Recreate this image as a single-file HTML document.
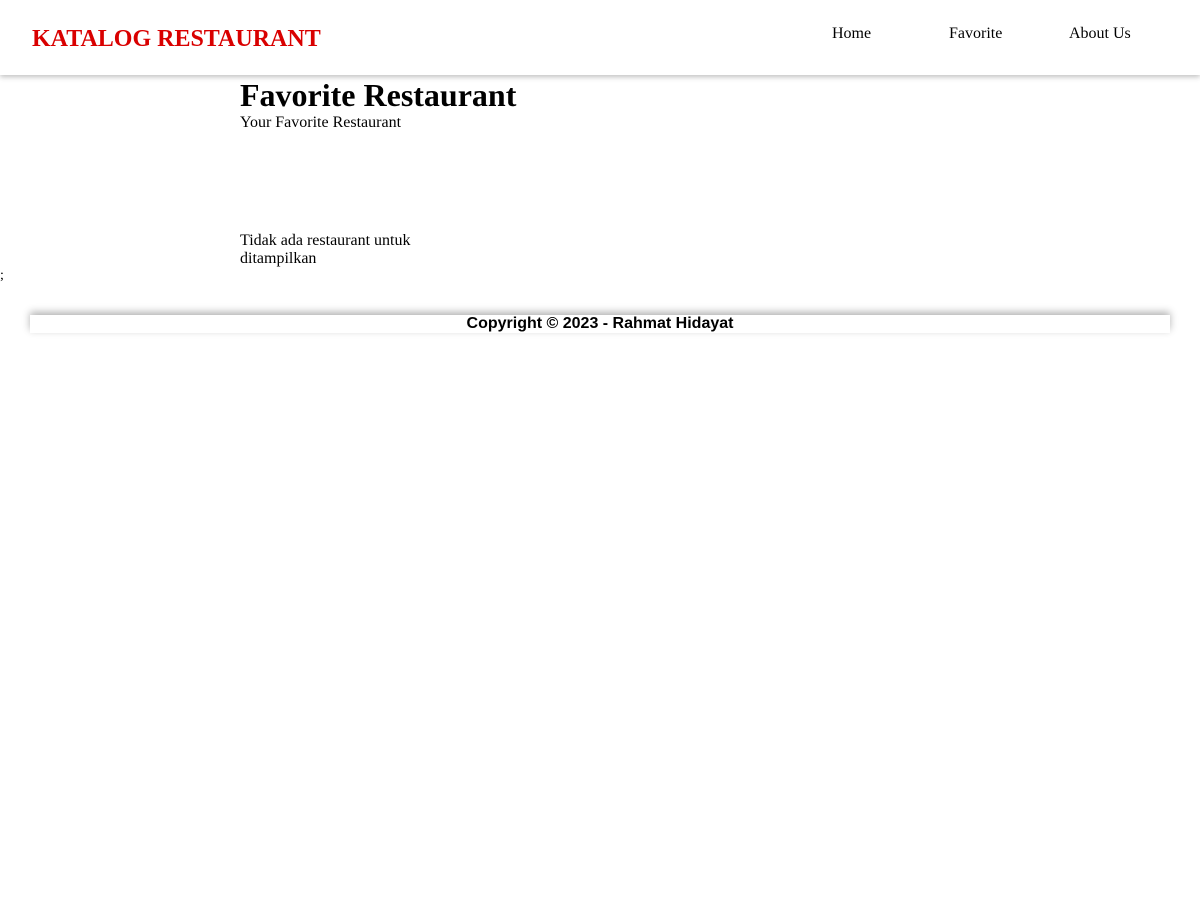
<!DOCTYPE html>
<html><head><style>
body{margin:0;font-family:"Liberation Serif",serif;background:#fff;width:1200px;height:900px;position:relative;overflow:hidden}
header{position:absolute;left:0;top:0;width:1200px;height:75px;background:#fff;box-shadow:0 2px 5px rgba(0,0,0,.25)}
.logo{position:absolute;left:32px;top:26px;color:#d90000;font-weight:bold;font-size:24px;margin:0}
nav a{position:absolute;top:25px;font-size:16px;color:#000;text-decoration:none}
.t{position:absolute;left:240px;margin:0}
h2.t{top:77px;font-size:32px;font-weight:bold}
footer{position:absolute;left:30px;top:315px;width:1140px;height:18px;background:#fff;box-shadow:0 -3px 8px rgba(0,0,0,.3);text-align:center;font-family:"Liberation Sans",sans-serif;font-weight:bold;font-size:16px;line-height:18px}
</style></head><body>
<header><div class="logo">KATALOG RESTAURANT</div>
<nav><a style="left:832px">Home</a><a style="left:949px">Favorite</a><a style="left:1069px">About Us</a></nav></header>
<h2 class="t">Favorite Restaurant</h2>
<div class="t" style="top:114px;font-size:16px">Your Favorite Restaurant</div>
<div class="t" style="top:232px;font-size:16px;width:180px;line-height:18px">Tidak ada restaurant untuk ditampilkan</div>
<div style="position:absolute;left:0;top:268px;font-size:14px">;</div>
<footer>Copyright © 2023 - Rahmat Hidayat</footer>
</body></html>
